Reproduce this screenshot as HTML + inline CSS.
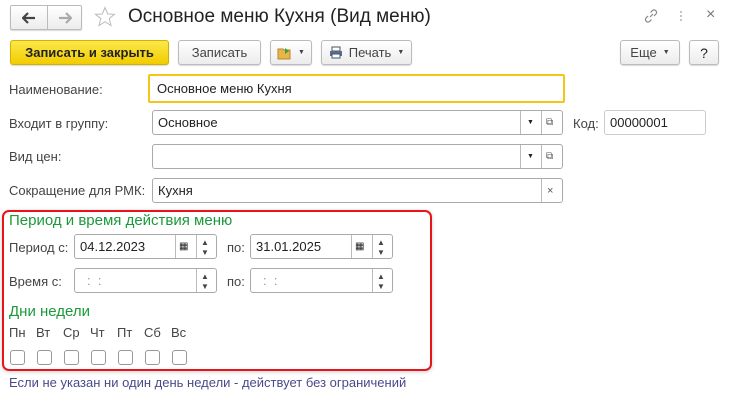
<!DOCTYPE html>
<html><head><meta charset="utf-8"><style>
*{box-sizing:border-box;margin:0;padding:0}
body{width:732px;height:401px;background:#fff;font-family:"Liberation Sans",sans-serif;font-size:13px;color:#333;position:relative;overflow:hidden}
.a{position:absolute}
.btn{position:absolute;border:1px solid #bbb;border-radius:3px;background:linear-gradient(#fff,#ececec);box-shadow:0 1px 1px rgba(0,0,0,.15);display:flex;align-items:center;justify-content:center;color:#444}
.f{position:absolute;border:1px solid #aaa;border-radius:3px;background:#fff;padding-left:5px;display:flex;align-items:center;color:#222}
.sep{position:absolute;top:0;bottom:0;border-left:1px solid #bbb}
.lbl{position:absolute;color:#444}
.g{position:absolute;color:#1a9a3a;font-size:15px}
.cb{position:absolute;width:15px;height:15px;border:1px solid #999;border-radius:3px;top:350px}
.dt{position:absolute;font-size:8px;color:#444}
</style></head><body>
<div class="btn" style="left:10px;top:5px;width:72px;height:25px;border-radius:2px"><svg class="a" style="left:11px;top:6px" width="14" height="12" viewBox="0 0 14 12"><path d="M1 6h12M6 1L1 6l5 5" fill="none" stroke="#444" stroke-width="2.2"/></svg><div class="sep" style="left:36px"></div><svg class="a" style="left:47px;top:6px" width="14" height="12" viewBox="0 0 14 12"><path d="M1 6h12M8 1l5 5-5 5" fill="none" stroke="#aaa" stroke-width="2.2"/></svg></div>
<svg class="a" style="left:94px;top:6px" width="22" height="22" viewBox="0 0 22 22"><polygon points="11,1.5 13.7,8 20.5,8.3 15.2,12.6 17,19.5 11,15.7 5,19.5 6.8,12.6 1.5,8.3 8.3,8" fill="none" stroke="#bbb" stroke-width="1"/></svg>
<div class="a" style="left:128px;top:6px;font-size:19px;color:#222">Основное меню Кухня (Вид меню)</div>
<svg class="a" style="left:643px;top:8px" width="16" height="16" viewBox="0 0 16 16"><path d="M7 9l3-3M5 8l-2 2a2.5 2.5 0 0 0 3.5 3.5l2-2M11 8l2-2a2.5 2.5 0 0 0-3.5-3.5l-2 2" fill="none" stroke="#888" stroke-width="1.2"/></svg>
<div class="a" style="left:680px;top:10px;width:2px;height:12px;background:radial-gradient(#888 40%,transparent 45%) 0 0/2px 4px"></div>
<div class="a" style="left:706px;top:6px;font-size:16px;color:#777">×</div>
<div class="btn" style="left:10px;top:40px;width:159px;height:25px;background:linear-gradient(#fbe84a,#f2cc00);border-color:#d4b000;color:#222;font-weight:bold">Записать и закрыть</div>
<div class="btn" style="left:178px;top:40px;width:83px;height:25px">Записать</div>
<div class="btn" style="left:270px;top:40px;width:42px;height:25px"><svg width="16" height="14" viewBox="0 0 16 14"><path d="M1 3h5l1 1h6v9H1z" fill="#e8b54a" stroke="#b8862a"/><path d="M8 2l4 3-4 3z" fill="#3aa03a"/></svg><span style="font-size:7px;margin-left:5px">▼</span></div>
<div class="btn" style="left:321px;top:40px;width:91px;height:25px"><svg width="14" height="13" viewBox="0 0 14 13"><rect x="3" y="1" width="8" height="4" fill="#fff" stroke="#456"/><rect x="1" y="5" width="12" height="5" fill="#56708c"/><rect x="3" y="8" width="8" height="4" fill="#fff" stroke="#456"/></svg><span style="margin-left:6px">Печать</span><span style="font-size:7px;margin-left:6px">▼</span></div>
<div class="btn" style="left:620px;top:40px;width:60px;height:25px">Еще<span style="font-size:7px;margin-left:6px">▼</span></div>
<div class="btn" style="left:689px;top:40px;width:30px;height:25px;font-size:14px;color:#222">?</div>

<div class="lbl" style="left:9px;top:82px">Наименование:</div>
<div class="f" style="left:148px;top:74px;width:417px;height:29px;border:2px solid #f5c518;border-radius:2px;padding-left:7px">Основное меню Кухня</div>
<div class="lbl" style="left:9px;top:116px">Входит в группу:</div>
<div class="f" style="left:152px;top:110px;width:411px;height:25px">Основное<div class="sep" style="left:367px"></div><span class="a" style="left:374px;font-size:7px">▼</span><div class="sep" style="left:388px"></div><span class="a" style="left:393px;font-size:10px;color:#555">⧉</span></div>
<div class="lbl" style="left:573px;top:116px">Код:</div>
<div class="f" style="left:604px;top:110px;width:102px;height:25px;border-color:#ccc">00000001</div>
<div class="lbl" style="left:9px;top:149px">Вид цен:</div>
<div class="f" style="left:152px;top:144px;width:411px;height:25px"><div class="sep" style="left:367px"></div><span class="a" style="left:374px;font-size:7px">▼</span><div class="sep" style="left:388px"></div><span class="a" style="left:393px;font-size:10px;color:#555">⧉</span></div>
<div class="lbl" style="left:9px;top:183px">Сокращение для РМК:</div>
<div class="f" style="left:152px;top:178px;width:411px;height:25px">Кухня<div class="sep" style="left:388px"></div><span class="a" style="left:394px;font-size:11px;color:#555">×</span></div>

<div class="a" style="left:2px;top:210px;width:430px;height:161px;border:2px solid #e8141a;border-radius:7px;box-shadow:0 1px 4px rgba(0,0,0,.2)"></div>
<div class="g" style="left:9px;top:212px">Период и время действия меню</div>
<div class="lbl" style="left:9px;top:240px">Период с:</div>
<div class="f" style="left:74px;top:234px;width:143px;height:25px">04.12.2023<div class="sep" style="left:100px"></div><span class="a" style="left:104px;font-size:10px">▦</span><div class="sep" style="left:121px"></div><span class="dt" style="left:126px;top:3px">▲</span><span class="dt" style="left:126px;top:13px">▼</span></div>
<div class="lbl" style="left:227px;top:240px">по:</div>
<div class="f" style="left:250px;top:234px;width:143px;height:25px">31.01.2025<div class="sep" style="left:100px"></div><span class="a" style="left:104px;font-size:10px">▦</span><div class="sep" style="left:121px"></div><span class="dt" style="left:126px;top:3px">▲</span><span class="dt" style="left:126px;top:13px">▼</span></div>
<div class="lbl" style="left:9px;top:274px">Время с:</div>
<div class="f" style="left:74px;top:268px;width:143px;height:25px;color:#999;padding-left:12px">:&nbsp;&nbsp;:<div class="sep" style="left:121px"></div><span class="dt" style="left:126px;top:3px">▲</span><span class="dt" style="left:126px;top:13px">▼</span></div>
<div class="lbl" style="left:227px;top:274px">по:</div>
<div class="f" style="left:250px;top:268px;width:143px;height:25px;color:#999;padding-left:12px">:&nbsp;&nbsp;:<div class="sep" style="left:121px"></div><span class="dt" style="left:126px;top:3px">▲</span><span class="dt" style="left:126px;top:13px">▼</span></div>
<div class="g" style="left:9px;top:303px">Дни недели</div>
<div class="lbl" style="left:9px;top:325px">Пн</div><div class="lbl" style="left:36px;top:325px">Вт</div><div class="lbl" style="left:63px;top:325px">Ср</div><div class="lbl" style="left:90px;top:325px">Чт</div><div class="lbl" style="left:117px;top:325px">Пт</div><div class="lbl" style="left:144px;top:325px">Сб</div><div class="lbl" style="left:171px;top:325px">Вс</div>
<div class="cb" style="left:10px"></div><div class="cb" style="left:37px"></div><div class="cb" style="left:64px"></div><div class="cb" style="left:91px"></div><div class="cb" style="left:118px"></div><div class="cb" style="left:145px"></div><div class="cb" style="left:172px"></div>
<div class="a" style="left:9px;top:375px;color:#4a4a8a">Если не указан ни один день недели - действует без ограничений</div>
</body></html>
